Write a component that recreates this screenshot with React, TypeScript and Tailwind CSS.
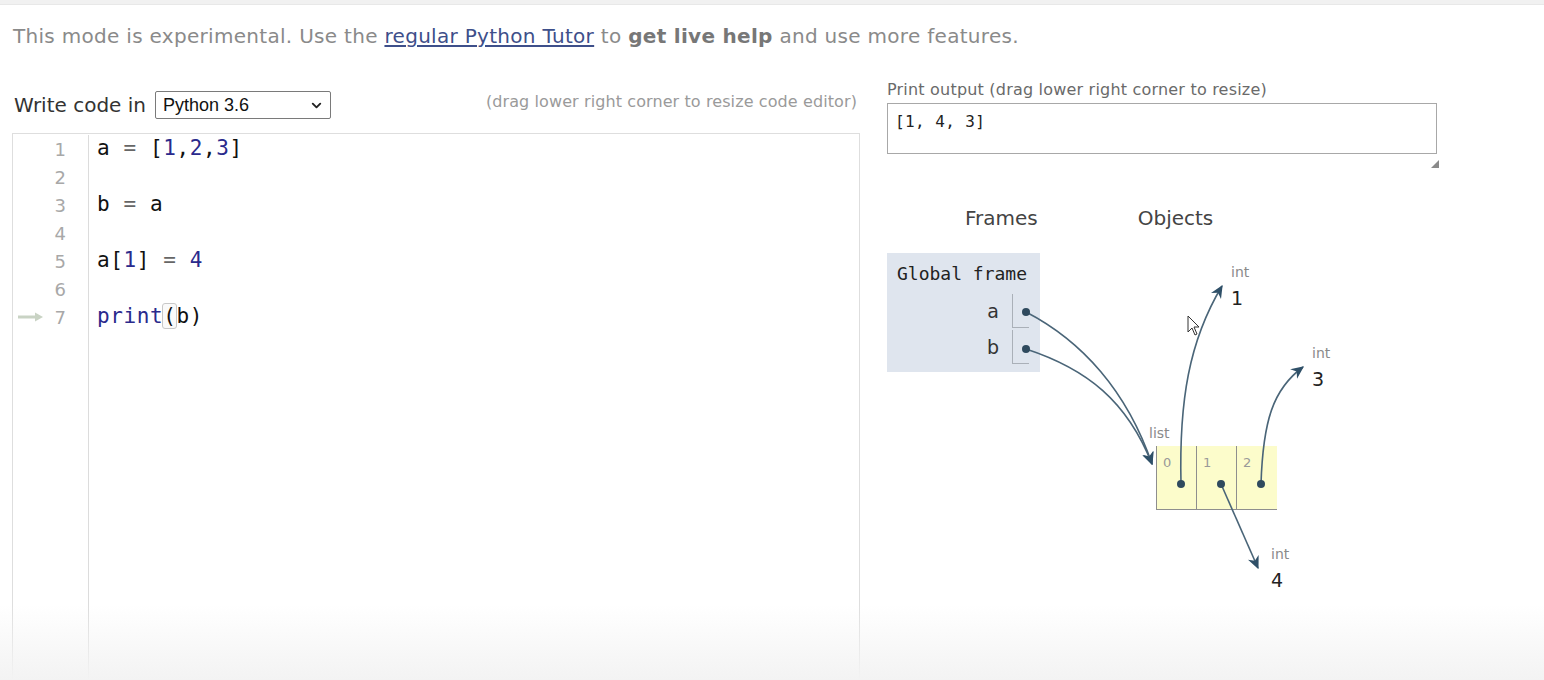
import { ChevronDown } from "lucide-react";

const sans = "font-['DejaVu_Sans',Verdana,sans-serif]";
const mono = "font-['DejaVu_Sans_Mono',monospace]";

const num = "text-[#2a2a8c]";

function CodeLine({ n, children, current }: { n: number; children?: React.ReactNode; current?: boolean }) {
  return (
    <div className="flex h-[28px] items-center">
      <div className="w-[76px] shrink-0 flex items-center justify-between pl-[5px] pr-[22px] border-r border-[#dcdcdc] h-full">
        <span className="w-[26px]">
          {current && (
            <svg width="26" height="10" viewBox="0 0 26 10">
              <path d="M0 5 H18" stroke="#c9d3c4" strokeWidth="3" />
              <path d="M17 0.5 L25 5 L17 9.5 Z" fill="#c9d3c4" />
            </svg>
          )}
        </span>
        <span className={`${sans} text-[18px] text-[#a8a8a8]`}>{n}</span>
      </div>
      <div className={`${mono} pl-[8px] text-[21px] tracking-[0.6px] text-[#111] whitespace-pre`}>{children}</div>
    </div>
  );
}

export default function App() {
  return (
    <div className="relative w-[1544px] h-[680px] overflow-hidden bg-white">
      <div className="h-[5px] bg-[#f1f1f1] border-b border-[#e8e8e8]" />

      <p className={`${sans} mt-[19px] pl-[13px] text-[20px] tracking-[0.3px] leading-[24px] text-[#8a8a8a]`}>
        This mode is experimental. Use the{" "}
        <a className="text-[#3e4f8a] underline underline-offset-2">regular Python Tutor</a> to{" "}
        <b className="text-[#777]">get live help</b> and use more features.
      </p>

      <div className="flex mt-[32px]">
        {/* left: code editor */}
        <div className="w-[848px] ml-[12px] pt-[11px]">
          <div className="flex items-center justify-between h-[28px]">
            <div className="flex items-center">
              <span className={`${sans} text-[20px] text-[#333] ml-[2px]`}>Write code in</span>
              <div className="ml-[9px] w-[176px] h-[28px] border border-[#7a7a7a] rounded-[2px] flex items-center justify-between pl-[7px] pr-[6px]">
                <span className="font-['Liberation_Sans',Arial,sans-serif] text-[18px] text-[#111]">Python 3.6</span>
                <ChevronDown size={15} strokeWidth={3} className="text-[#222]" />
              </div>
            </div>
            <span className={`${sans} text-[16px] tracking-[0.1px] text-[#9a9a9a] mb-[6px] mr-[3px]`}>
              (drag lower right corner to resize code editor)
            </span>
          </div>

          <div className="mt-[14px] h-[600px] border border-[#dedede] bg-white pt-[1px]">
            <div className="flex flex-col">
              <CodeLine n={1}>
                a <span className="text-[#666]">=</span> [<span className={num}>1</span>,<span className={num}>2</span>,<span className={num}>3</span>]
              </CodeLine>
              <CodeLine n={2} />
              <CodeLine n={3}>
                b <span className="text-[#666]">=</span> a
              </CodeLine>
              <CodeLine n={4} />
              <CodeLine n={5}>
                a[<span className={num}>1</span>] <span className="text-[#666]">=</span> <span className={num}>4</span>
              </CodeLine>
              <CodeLine n={6} />
              <CodeLine n={7} current>
                <span className="text-[#2a2a8c]">print</span>
                <span className="outline outline-1 outline-[#c8c8c8] rounded-[2px] bg-[#fafafa]">(</span>b)
              </CodeLine>
              <div className="flex h-[420px]">
                <div className="w-[76px] border-r border-[#dcdcdc]" />
              </div>
            </div>
          </div>
        </div>

        {/* right: output + visualization */}
        <div className="ml-[27px] w-[560px]">
          <p className={`${sans} text-[16px] tracking-[0.2px] leading-[20px] text-[#6a6a6a]`}>
            Print output (drag lower right corner to resize)
          </p>
          <div className="mt-[3px] w-[550px] h-[51px] border border-[#a8a8a8] px-[7px] pt-[5px]">
            <span className={`${mono} text-[16px] tracking-[0.4px] text-[#222] whitespace-pre`}>[1, 4, 3]</span>
          </div>
          <div className="w-[550px] flex justify-end">
            <svg width="10" height="10" viewBox="0 0 10 10" className="mt-[5px] mr-[-3px]">
              <path d="M9 1 L9 9 L1 9 Z" fill="#8a8a8a" />
            </svg>
          </div>

          <div className="relative mt-[32px] h-[440px] pt-[5px]">
            <div className={`${sans} flex text-[20px] text-[#444] leading-[24px]`}>
              <span className="ml-[78px]">Frames</span>
              <span className="ml-[100px]">Objects</span>
            </div>

            <div className="mt-[23px] w-[153px] h-[119px] bg-[#dfe5ee] pt-[10px]">
              <div className={`${mono} text-[18px] text-[#222] leading-[22px] pl-[10px]`}>Global frame</div>
              <div className="mt-[9px] flex flex-col gap-[2px]">
                {["a", "b"].map((v) => (
                  <div key={v} className="flex h-[34px] items-center">
                    <span className={`${sans} w-[112px] text-right text-[19px] text-[#333]`}>{v}</span>
                    <span className="ml-[13px] w-[17px] h-full border-l border-b border-[#aab0b8]" />
                  </div>
                ))}
              </div>
            </div>

            {/* objects */}
            <span className={`${sans} absolute left-[262px] top-[222px] text-[14px] text-[#8a8a8a]`}>list</span>
            <div className="absolute left-[269px] top-[245px] flex bg-[#fcfccb] border-l border-b border-[#8e8e8e]">
              {["0", "1", "2"].map((i, k) => (
                <div key={i} className={`w-[40px] h-[63px] pl-[6px] pt-[3px] ${k < 2 ? "border-r border-[#8e8e8e]" : ""}`}>
                  <span className={`${sans} text-[13px] text-[#999]`}>{i}</span>
                </div>
              ))}
            </div>

            {[
              { l: 344, t: 62, v: "1" },
              { l: 425, t: 143, v: "3" },
              { l: 384, t: 344, v: "4" },
            ].map((o) => (
              <div key={o.v} className={`${sans} absolute flex flex-col leading-[18px]`} style={{ left: o.l, top: o.t }}>
                <span className="text-[14px] text-[#8a8a8a]">int</span>
                <span className="text-[19px] text-[#222] mt-[8px]">{o.v}</span>
              </div>
            ))}

            <svg className="absolute inset-0 pointer-events-none" width="560" height="440" viewBox="0 0 560 440">
              <defs>
                <marker id="ah" viewBox="0 0 10 10" refX="9" refY="5" markerWidth="13" markerHeight="13" markerUnits="userSpaceOnUse" orient="auto">
                  <path d="M0 0.5 L10 5 L0 9.5 L3 5 Z" fill="#2f5068" />
                </marker>
              </defs>
              <g stroke="#4a6578" strokeWidth="1.6" fill="none" markerEnd="url(#ah)">
                <path d="M139 111 C 195 140, 240 190, 265 263" />
                <path d="M139 148 C 200 168, 240 200, 265 263" />
                <path d="M294 283 C 292 200, 302 140, 335 85" />
                <path d="M374 283 C 376 220, 386 188, 416 166" />
                <path d="M334 283 L 371 367" />
              </g>
              <g fill="#2f4a5e">
                <circle cx="139" cy="111" r="4" />
                <circle cx="139" cy="148" r="4" />
                <circle cx="294" cy="283" r="4" />
                <circle cx="334" cy="283" r="4" />
                <circle cx="374" cy="283" r="4" />
              </g>
              <path d="M301 115 L301 131 L305 127 L308 134 L310 133 L307 126 L312 126 Z" fill="white" stroke="#333" strokeWidth="1" />
            </svg>
          </div>
        </div>
      </div>

      <div className="absolute inset-x-0 bottom-0 h-[75px] bg-linear-to-b from-white/0 to-[#f3f3f3] pointer-events-none" />
    </div>
  );
}
